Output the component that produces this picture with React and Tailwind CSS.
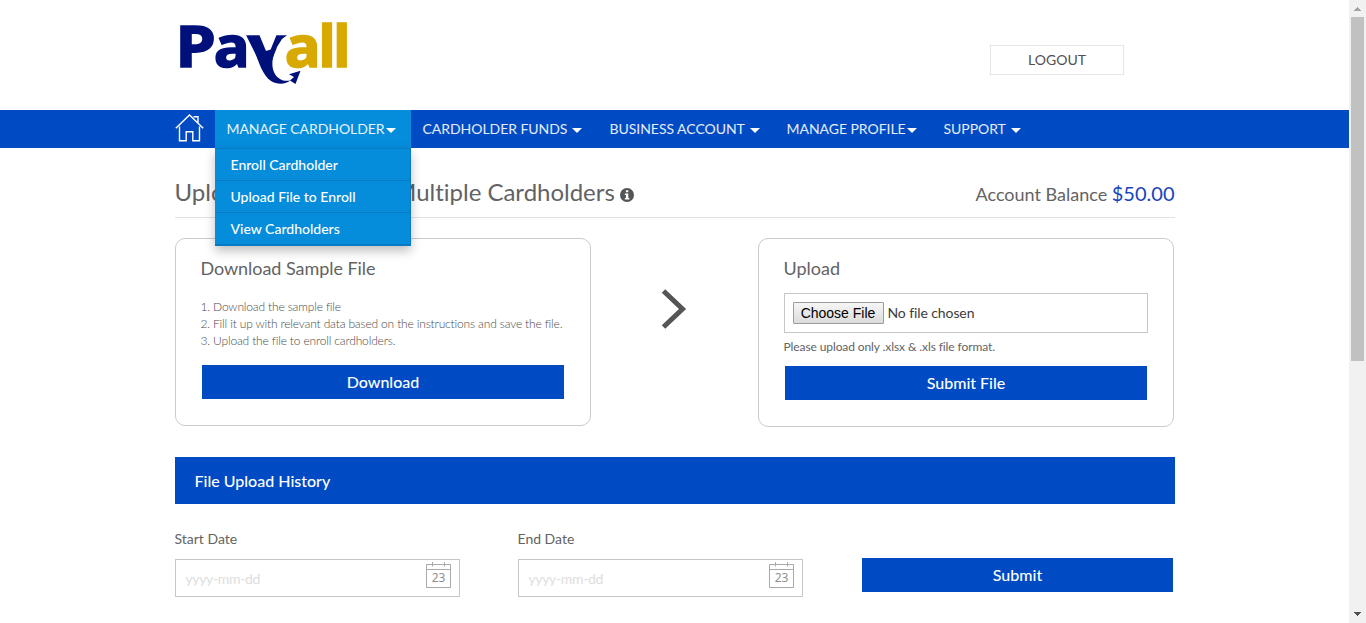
import React from "react";

const NAV = [
  { label: "CARDHOLDER FUNDS", item: "w-[187px]", text: "w-[145px]", gap: "ml-[4px]" },
  { label: "BUSINESS ACCOUNT", item: "w-[177px]", text: "w-[136px]", gap: "ml-[4px]" },
  { label: "MANAGE PROFILE", item: "w-[157px]", text: "w-[119px]", gap: "ml-[1px]" },
  { label: "SUPPORT", item: "w-[100px]", text: "w-[62px]", gap: "ml-[5px]" },
];
const MENU = ["Enroll Cardholder", "Upload File to Enroll", "View Cardholders"];

function Caret({ className = "" }) {
  return (
    <svg className={"h-[5px] w-[10px] shrink-0 " + className} viewBox="0 0 10 5" fill="#fff">
      <path d="M0 0h10L5 5z" />
    </svg>
  );
}

function Logo() {
  return (
    <svg className="h-[110px] w-[200px]" viewBox="0 -20 200 110" role="img" aria-label="Payall">
      <defs>
        <clipPath id="arms">
          <path d="M70 14H113.500L107 19L102 27L97 40H70z" />
        </clipPath>
      </defs>
      <g fontFamily="'Noto Sans', sans-serif" fontWeight="700" fontSize="57.5" strokeWidth="1.5">
        <g fill="#00107a" stroke="#00107a">
          <text transform="translate(0.6 47.3) scale(1.13 1)">P</text>
          <text transform="translate(38.7 47.3) scale(1.04 1)">a</text>
          <g clipPath="url(#arms)">
            <text transform="translate(72.5 47.3) scale(1.24 1)">y</text>
          </g>
        </g>
        <g fill="#d8a900" stroke="#d8a900">
          <text transform="translate(109.7 47.3) scale(1.04 1)">a</text>
          <text x="143.5" y="47.300">l</text>
          <text x="158.2" y="47.300">l</text>
        </g>
      </g>
      <path
        d="M79 29L90.500 31L101.500 28C98 35 96 43 98.500 51C101 58 108 62.500 115.500 60.300C111 64.300 102.500 65 96 61C88 56 84 43 79 29Z"
        fill="#00107a"
      />
      <path d="M125.500 50.800L114 54.200L119 57L115 60.500L120.500 64Z" fill="#00107a" />
    </svg>
  );
}

function Home() {
  return (
    <svg className="h-[28px] w-[29px]" viewBox="0 0 29 28" fill="none" stroke="#fff" strokeWidth="1.400">
      <path d="M.8 14.200L14.500 1L28.200 14.200M18.500 2.700h4.500v6.500M4.500 12.500v14.300h6.700v-9h6.600v9h6.700V12.500" />
    </svg>
  );
}

function CalendarIcon() {
  return (
    <svg className="mt-[1px] h-[28px] w-[26px]" viewBox="0 0 26 28" fill="none" stroke="#a9a9a9">
      <path d="M.5 3.500h24v23H.5zM.5 8.500h24M6.500 1v4.500M18.500 1v4.500" />
      <text x="12.500" y="21" textAnchor="middle" fontFamily="'Noto Sans', sans-serif" fontSize="12" fill="#8f8f8f" stroke="none">
        23
      </text>
    </svg>
  );
}

function DateField({ label, className = "" }) {
  return (
    <div className={"w-[285px] " + className}>
      <label className="block h-[20px] text-[14px] leading-[20px]">{label}</label>
      <div className="mt-[10px] flex h-[38px] justify-between border border-[#c6c6c6] pr-[7px] pl-[10px]">
        <span className="pt-[9px] text-[14px] leading-[20px] tracking-[-0.35px] text-[#dedede]">yyyy-mm-dd</span>
        <CalendarIcon />
      </div>
    </div>
  );
}

function Button({ children, className = "" }) {
  return (
    <button className={"block h-[34px] bg-[#004bc4] pl-px text-[16px] leading-[34px] font-medium text-white " + className}>
      {children}
    </button>
  );
}

function Scrollbar() {
  return (
    <div className="flex h-full w-[17px] flex-col items-center bg-[#f1f1f1]">
      <svg className="h-[17px] w-[17px] shrink-0" viewBox="0 0 17 17" shapeRendering="crispEdges">
        <path d="M5 11L8.500 7L12 11z" fill="#a3a3a3" />
      </svg>
      <div className="h-[344px] w-[13px] bg-[#c1c1c1]" />
      <svg className="mt-auto h-[17px] w-[17px] shrink-0" viewBox="0 0 17 17" shapeRendering="crispEdges">
        <path d="M5 6L12 6L8.500 10z" fill="#505050" />
      </svg>
    </div>
  );
}

export default function App() {
  return (
    <div className="flex h-[623px] w-[1366px] overflow-hidden bg-white font-['Lato',sans-serif] text-[#636363]">
      <div className="w-[1349px]">
        <header className="mx-auto flex h-[110px] w-[1000px] justify-between">
          <Logo />
          <button className="mt-[45px] mr-[51px] h-[30px] w-[134px] border border-[#e6e6e6] pl-px text-[14px] leading-[28px] text-[#505050]">
            LOGOUT
          </button>
        </header>

        <nav className="h-[38px] bg-[#004bc4]">
          <div className="mx-auto flex h-[38px] w-[1000px] text-[14px] leading-[38px] text-white">
            <div className="w-[40px] pt-[4px]">
              <Home />
            </div>
            <div className="relative w-[196px] bg-[#058cdb]">
              <div className="flex h-[38px] items-center pl-[12px]">
                <span className="w-[158px] tracking-[-0.07px] whitespace-nowrap text-white/90">MANAGE CARDHOLDER</span>
                <Caret className="mt-[3px] ml-[1px]" />
              </div>
              <ul className="absolute top-[38px] left-0 z-10 w-[196px] border-r border-b border-[#0879c2] bg-[#058cdb] shadow-[0_5px_10px_rgba(0,0,0,0.25)]">
                {MENU.map((m) => (
                  <li key={m} className="h-[32px] border-t border-[#0879c2] pl-[16px] leading-[31px] font-medium last:h-[33px] last:border-b">
                    {m}
                  </li>
                ))}
              </ul>
            </div>
            {NAV.map((n) => (
              <div key={n.label} className={"flex items-center pl-[12px] " + n.item}>
                <span className={"tracking-[-0.04px] whitespace-nowrap text-white/90 " + n.text}>{n.label}</span>
                <Caret className={"mt-[3px] " + n.gap} />
              </div>
            ))}
          </div>
        </nav>

        <main className="mx-auto w-[1000px]">
          <div className="flex h-[70px] justify-between border-b border-[#e2e2e2]">
            <h1 className="flex pt-[29px] text-[24px] leading-[30px] tracking-[-0.01px] [font-variant-ligatures:none]">
              Upload File to Enroll Multiple Cardholders
              <svg className="mt-[11px] ml-[5px] h-[14px] w-[14px]" viewBox="0 0 13 13">
                <circle cx="6.500" cy="6.500" r="6.500" fill="#555" />
                <path d="M5.500 2h2.200v2H5.500zM4.500 5.200h3.200v4h1v1.500H4.500V9.200h1V6.600h-1z" fill="#fff" />
              </svg>
            </h1>
            <p className="pt-[30px] text-[18px] leading-[30px]">
              Account Balance <span className="text-[20px] text-[#1744bd]">$50.00</span>
            </p>
          </div>

          <div className="mt-[20px] flex items-start">
            <section className="h-[188px] w-[416px] rounded-[10px] border border-[#cbcbcb] pt-[18px] pl-[25px]">
              <h2 className="text-[18px] leading-[22px] tracking-[-0.05px]">Download Sample File</h2>
              <ol className="mt-[19px] text-[12px] leading-[17px] font-light tracking-[-0.16px] text-[#4a4a4a]">
                <li>1. Download the sample file</li>
                <li>2. Fill it up with relevant data based on the instructions and save the file.</li>
                <li>3. Upload the file to enroll cardholders.</li>
              </ol>
              <Button className="mt-[16px] ml-[1px] w-[362px]">Download</Button>
            </section>
            <div className="flex w-[167px] justify-center pt-[51px]">
              <svg className="h-[40px] w-[26px]" viewBox="0 0 26 40" fill="none" stroke="#555" strokeWidth="5">
                <path d="M2.500 2L21.500 20L2.500 38" />
              </svg>
            </div>
            <section className="h-[189px] w-[416px] rounded-[10px] border border-[#cbcbcb] pt-[18px] pl-[25px]">
              <h2 className="text-[18px] leading-[22px]">Upload</h2>
              <div className="mt-[14px] flex h-[40px] w-[364px] items-center border border-[#c6c6c6] pl-[8px]">
                <span className="h-[22px] w-[91px] rounded-[1px] border border-[#9c9c9c] bg-linear-to-b from-[#f6f6f6] to-[#dcdcdc] text-center font-['Liberation_Sans',sans-serif] text-[14px] leading-[20px] text-black">
                  Choose File
                </span>
                <span className="mb-[2px] ml-[4px] text-[14px] tracking-[-0.1px] text-[#3c3c3c]">No file chosen</span>
              </div>
              <p className="mt-[5px] text-[12px] leading-[18px] tracking-[-0.1px]">Please upload only .xlsx &amp; .xls file format.</p>
              <Button className="mt-[10px] ml-[1px] w-[362px]">Submit File</Button>
            </section>
          </div>

          <h3 className="mt-[30px] h-[47px] bg-[#004bc4] pl-[20px] text-[16px] leading-[48px] font-medium text-white">
            File Upload History
          </h3>
          <div className="mt-[25px] flex">
            <DateField label="Start Date" />
            <DateField label="End Date" className="ml-[58px]" />
            <Button className="mt-[29px] ml-[59px] w-[311px]">Submit</Button>
          </div>
        </main>
      </div>
      <Scrollbar />
    </div>
  );
}
